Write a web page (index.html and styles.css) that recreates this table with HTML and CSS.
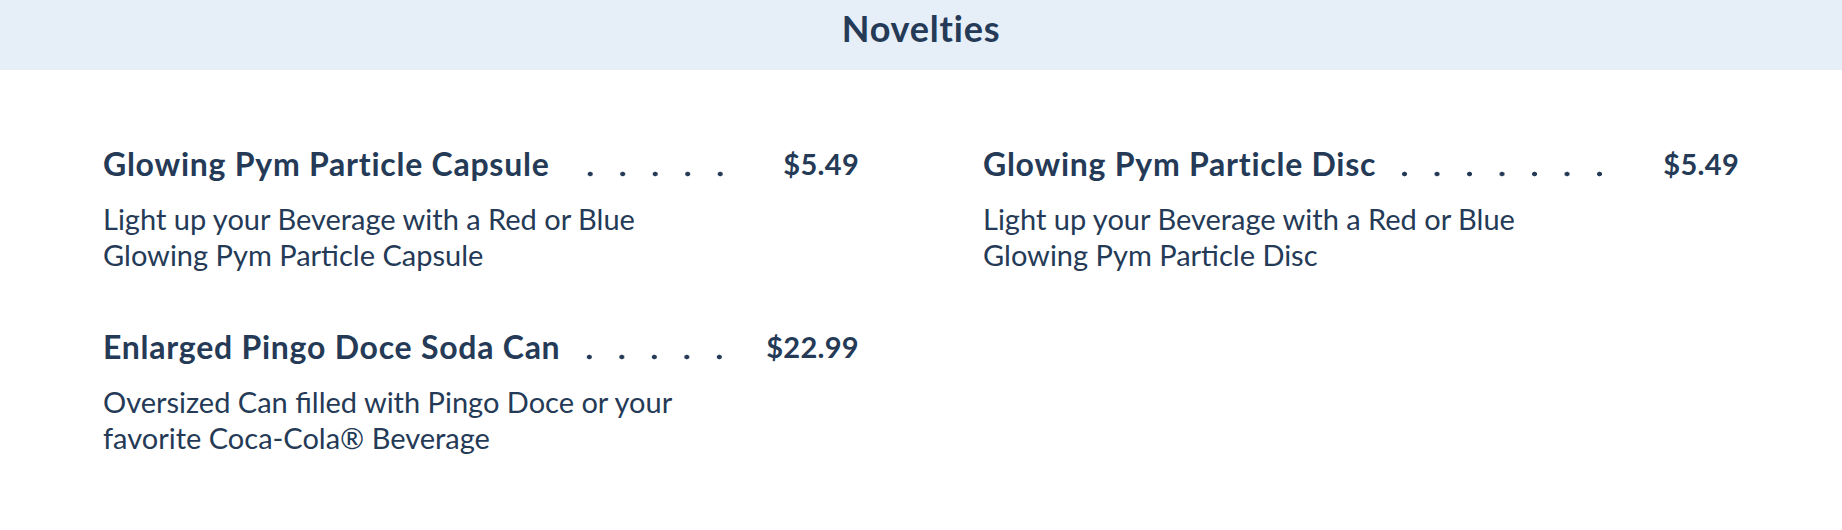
FILE: index.html
```html
<!DOCTYPE html>
<html lang="en">
<head>
<meta charset="utf-8">
<title>Novelties</title>
<link rel="stylesheet" href="styles.css">
</head>
<body>
<section class="menu-section">
  <header class="section-header">
    <h2 class="section-title">Novelties</h2>
  </header>
  <div class="menu-grid">
    <article class="menu-item">
      <div class="item-head">
        <h3 class="item-name">Glowing Pym Particle Capsule</h3>
        <span class="item-leader" aria-hidden="true"></span>
        <span class="item-price">$5.49</span>
      </div>
      <p class="item-desc">Light up your Beverage with a Red or Blue Glowing Pym Particle Capsule</p>
    </article>
    <article class="menu-item">
      <div class="item-head">
        <h3 class="item-name">Glowing Pym Particle Disc</h3>
        <span class="item-leader" aria-hidden="true"></span>
        <span class="item-price">$5.49</span>
      </div>
      <p class="item-desc">Light up your Beverage with a Red or Blue Glowing Pym Particle Disc</p>
    </article>
    <article class="menu-item">
      <div class="item-head">
        <h3 class="item-name">Enlarged Pingo Doce Soda Can</h3>
        <span class="item-leader" aria-hidden="true"></span>
        <span class="item-price">$22.99</span>
      </div>
      <p class="item-desc">Oversized Can filled with Pingo Doce or your favorite Coca-Cola® Beverage</p>
    </article>
  </div>
</section>
</body>
</html>
```

FILE: styles.css
```css
* { box-sizing: border-box; }

html, body {
  margin: 0;
  padding: 0;
  background: #ffffff;
}

body {
  font-family: "Lato", "Noto Sans", sans-serif;
  color: #243a56;
}

.section-header {
  background: #e6eef8;
  height: 70px;
  padding-top: 10px;
  text-align: center;
}

.section-title {
  margin: 0;
  font-size: 36px;
  line-height: 36px;
  font-weight: 700;
  letter-spacing: 0.8px;
}

.menu-grid {
  display: grid;
  grid-template-columns: 1fr 1fr;
  column-gap: 126px;
  row-gap: 54px;
  padding: 74px 105px 40px 103px;
}

.menu-item {
  display: flex;
  flex-direction: column;
  gap: 17px;
}

.item-head {
  display: grid;
  grid-template-columns: auto 1fr 121px;
  height: 40px;
  line-height: 40px;
  font-weight: 700;
}

.item-name {
  margin: 0;
  font-size: 32px;
  font-weight: 700;
  letter-spacing: 0.75px;
  white-space: nowrap;
}

.item-leader {
  padding-left: 26px;
  background-image: radial-gradient(circle, #243a56 2.1px, rgba(36,58,86,0) 2.7px);
  background-size: 32.5px 6px;
  background-repeat: repeat-x;
  background-position: right 0 top 26.5px;
  background-origin: content-box;
  background-clip: content-box;
}

.item-price {
  justify-self: end;
  margin-right: -2px;
  font-size: 29px;
  letter-spacing: 0.3px;
  white-space: nowrap;
}

.item-desc {
  margin: 0;
  max-width: 580px;
  font-size: 29px;
  line-height: 36px;
  font-weight: 400;
}
```
